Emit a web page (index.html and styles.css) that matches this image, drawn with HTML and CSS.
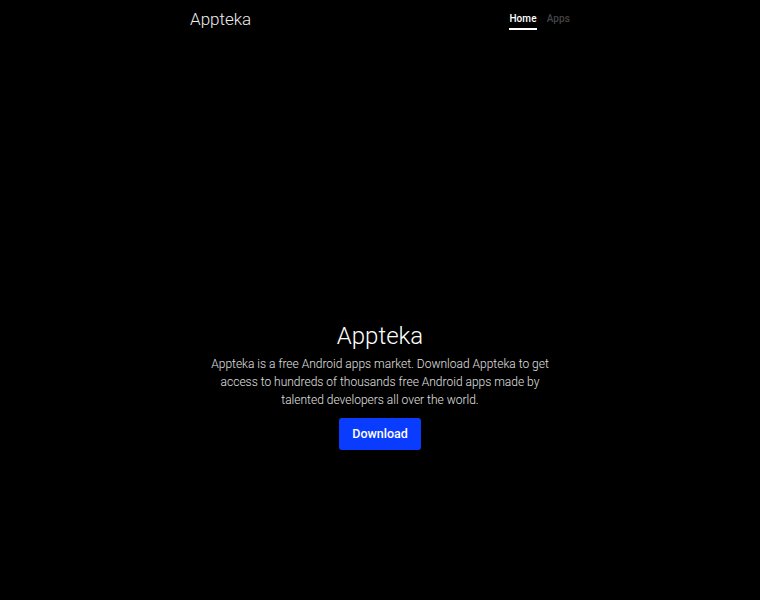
FILE: index.html
```html
<!DOCTYPE html>
<html lang="en">
<head>
<meta charset="utf-8">
<title>Appteka</title>
<link rel="stylesheet" href="styles.css">
</head>
<body>
<div class="cover">
  <header class="masthead">
    <div class="brand">Appteka</div>
    <nav class="nav">
      <a class="nav-link active" href="#">Home</a>
      <a class="nav-link" href="#">Apps</a>
    </nav>
  </header>
  <main class="hero">
    <h1 class="hero-title">Appteka</h1>
    <p class="lead">Appteka is a free Android apps market. Download Appteka to get access to hundreds of thousands free Android apps made by talented developers all over the world.</p>
    <a class="btn" href="#">Download</a>
  </main>
</div>
</body>
</html>
```
FILE: styles.css
```css
html, body {
  margin: 0;
  padding: 0;
  background: #000;
  color: #fff;
  font-family: Roboto, "Liberation Sans", Arial, sans-serif;
}
.cover {
  width: 380px;
  margin: 0 auto;
  height: 600px;
  display: flex;
  flex-direction: column;
}
.masthead {
  display: flex;
  justify-content: space-between;
  align-items: flex-start;
  padding-top: 9px;
}
.brand {
  font-size: 17px;
  font-weight: 300;
  line-height: 20px;
  color: #eee;
}
.nav {
  display: flex;
  gap: 10px;
  padding-top: 4px;
}
.nav-link {
  font-size: 10px;
  font-weight: 500;
  color: #444;
  text-decoration: none;
  line-height: 12px;
  padding-bottom: 3px;
  border-bottom: 2px solid transparent;
  letter-spacing: 0.1px;
}
.nav-link.active {
  color: #fff;
  border-bottom-color: #fff;
}
.hero {
  display: flex;
  flex-direction: column;
  align-items: center;
  text-align: center;
  padding-top: 291px;
}
.hero-title {
  margin: 0;
  font-size: 24px;
  font-weight: 300;
  line-height: 30px;
}
.lead {
  margin: 4px 0 9px;
  width: 350px;
  font-size: 12px;
  font-weight: 300;
  line-height: 18px;
  color: #e0e0e0;
  letter-spacing: 0;
}
.btn {
  display: inline-block;
  background: #0a3cff;
  color: #fff;
  text-decoration: none;
  font-size: 12.5px;
  font-weight: 500;
  line-height: 32px;
  padding: 0 13px;
  border-radius: 3px;
}
```
